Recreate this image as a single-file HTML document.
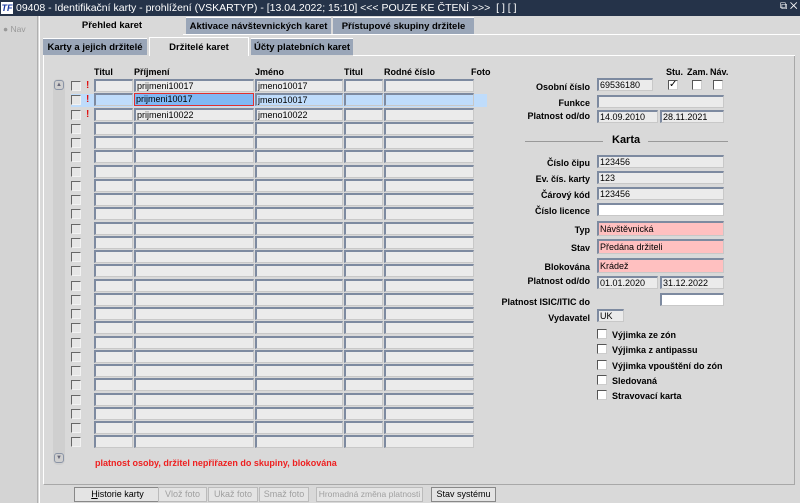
<!DOCTYPE html><html><head><meta charset="utf-8"><style>
*{margin:0;padding:0;box-sizing:border-box;white-space:nowrap}
html,body{width:800px;height:503px;overflow:hidden}
body{background:#d9d9d9;font-family:"Liberation Sans",sans-serif;font-size:9px;color:#000;position:relative}
.a{position:absolute}
.f{position:absolute;height:13px;background:#ebebeb;border:1px solid #c8c8c8;border-top:2px solid #7d8aa0;border-left:2px solid #7d8aa0;padding-left:1px;font-size:9px;line-height:10px;overflow:hidden}
.l{position:absolute;font-weight:bold;text-align:right;width:200px;font-size:9px}
.cb{position:absolute;width:10px;height:10px;background:#fff;border:1px solid #555;border-right-color:#ccc;border-bottom-color:#ccc}
.gc{position:absolute;width:10px;height:10px;border:1px solid #666;border-right-color:#f2f2f2;border-bottom-color:#f2f2f2;background:#e6e6e6}
.tab{position:absolute;font-weight:bold;text-align:center;font-size:9.5px}
.btn{position:absolute;top:487px;height:15px;border:1px solid #888;background:#e4e4e4;text-align:center;font-size:9px;line-height:13px;overflow:hidden}
.dis{color:#a0a0a0;border-color:#bbb}
</style></head><body>
<div class="a" style="left:0;top:0;width:800px;height:16px;background:#253349;color:#fff;font-size:10.5px;line-height:16px;padding-left:16px">09408 - Identifikační karty - prohlížení (VSKARTYP) - [13.04.2022; 15:10] &lt;&lt;&lt; POUZE KE ČTENÍ &gt;&gt;&gt;&nbsp; [ ] [ ]</div>
<div class="a" style="left:1px;top:2px;width:12px;height:12px;background:#fff;color:#1a3aa0;font-weight:bold;font-style:italic;font-size:9px;line-height:12px;text-align:center">TF</div>
<div class="a" style="left:780px;top:1px;color:#fff;font-size:10px">⧉ ✕</div>
<div class="a" style="left:0;top:16px;width:38px;height:487px;background:#d4d4d4;border-right:1px solid #b0b0b0"></div>
<div class="a" style="left:3px;top:24px;color:#999;font-size:8.5px">● Nav</div>
<div class="a" style="left:39px;top:16px;width:761px;height:487px;background:#d9d9d9;border-left:1px solid #fff"></div>
<div class="tab" style="left:41px;top:17px;width:142px;height:17px;line-height:17px;background:#d9d9d9">Přehled karet</div>
<div class="tab" style="left:186px;top:17px;width:145px;height:17px;line-height:17px;background:#9aa6b8;border-top:1px solid #fff">Aktivace návštevnických karet</div>
<div class="tab" style="left:333px;top:17px;width:141px;height:17px;line-height:17px;background:#9aa6b8;border-top:1px solid #fff">Přístupové skupiny držitele</div>
<div class="a" style="left:183px;top:34px;width:617px;height:1px;background:#fff"></div>
<div class="tab" style="left:43px;top:38px;width:104px;height:17px;line-height:17px;background:#9aa6b8;border-top:1px solid #fff">Karty a jejich držitelé</div>
<div class="tab" style="left:149px;top:37px;width:100px;height:19px;line-height:19px;background:#d9d9d9;border:1px solid #fff;border-bottom:none">Držitelé karet</div>
<div class="tab" style="left:251px;top:38px;width:102px;height:17px;line-height:17px;background:#9aa6b8;border-top:1px solid #fff">Účty platebních karet</div>
<div class="a" style="left:43px;top:55px;width:752px;height:430px;border:1px solid #fff;border-right-color:#a8a8a8;border-bottom-color:#a8a8a8;border-top:none"></div>
<div class="a" style="left:353px;top:55px;width:442px;height:1px;background:#fff"></div>
<div class="a" style="left:94px;top:67px;font-weight:bold">Titul</div>
<div class="a" style="left:134px;top:67px;font-weight:bold">Příjmení</div>
<div class="a" style="left:255px;top:67px;font-weight:bold">Jméno</div>
<div class="a" style="left:344px;top:67px;font-weight:bold">Titul</div>
<div class="a" style="left:384px;top:67px;font-weight:bold">Rodné číslo</div>
<div class="a" style="left:471px;top:67px;font-weight:bold">Foto</div>
<div class="a" style="left:53px;top:79px;width:12px;height:386px;background:#cfcfcf;border-radius:5px"></div>
<div class="a" style="left:54px;top:80px;width:10px;height:10px;border:1px solid #8a94a6;border-radius:3px;font-size:6px;text-align:center;line-height:8px;color:#667">▲</div>
<div class="a" style="left:54px;top:453px;width:10px;height:10px;border:1px solid #8a94a6;border-radius:3px;font-size:6px;text-align:center;line-height:8px;color:#667">▼</div>
<div class="a" style="left:71px;top:94px;width:416px;height:13px;background:#bfdcfb"></div>
<div id="g"></div>
<script>
var h='',names=[['prijmeni10017','jmeno10017'],['prijmeni10017','jmeno10017'],['prijmeni10022','jmeno10022']];
for(var i=0;i<26;i++){var y=79+i*14.25;
h+='<div class="gc" style="left:71px;top:'+(y+2)+'px"></div>';
if(i<3)h+='<div class="a" style="left:86px;top:'+(y+1)+'px;color:#e01010;font-weight:bold;font-size:10px">!</div>';
var n=names[i]||['',''],sel=i==1;
h+='<div class="f" style="left:94px;top:'+y+'px;width:39px;'+(sel?'background:#bfdcfb':'')+'"></div>';
h+='<div class="f" style="left:134px;top:'+y+'px;width:120px;'+(sel?'background:#7fb8f4;border:1px solid #e03030':'')+'">'+n[0]+'</div>';
h+='<div class="f" style="left:255px;top:'+y+'px;width:88px;'+(sel?'background:#bfdcfb':'')+'">'+n[1]+'</div>';
h+='<div class="f" style="left:344px;top:'+y+'px;width:39px;'+(sel?'background:#bfdcfb':'')+'"></div>';
h+='<div class="f" style="left:384px;top:'+y+'px;width:90px;'+(sel?'background:#bfdcfb':'')+'"></div>';}
document.getElementById('g').innerHTML=h;
</script>
<div class="a" style="left:95px;top:458px;color:#ee2020;font-weight:bold;font-size:9px">platnost osoby, držitel nepřiřazen do skupiny, blokována</div>
<div class="a" style="left:666px;top:67px;font-weight:bold">Stu.</div>
<div class="a" style="left:687px;top:67px;font-weight:bold">Zam.</div>
<div class="a" style="left:710px;top:67px;font-weight:bold">Náv.</div>
<div class="cb" style="left:668px;top:80px;font-size:10px;line-height:8px;text-align:center">✓</div>
<div class="cb" style="left:692px;top:80px"></div>
<div class="cb" style="left:713px;top:80px"></div>
<div class="l" style="left:390px;top:82px">Osobní číslo</div><div class="f" style="left:597px;top:78px;width:56px">69536180</div>
<div class="l" style="left:390px;top:98px">Funkce</div><div class="f" style="left:597px;top:95px;width:127px"></div>
<div class="l" style="left:390px;top:111px">Platnost od/do</div><div class="f" style="left:597px;top:110px;width:61px">14.09.2010</div><div class="f" style="left:660px;top:110px;width:64px">28.11.2021</div>
<div class="a" style="left:525px;top:141px;width:78px;height:1px;background:#999"></div>
<div class="a" style="left:648px;top:141px;width:80px;height:1px;background:#999"></div>
<div class="a" style="left:612px;top:134px;font-weight:bold;font-size:11px">Karta</div>
<div class="l" style="left:390px;top:158px">Číslo čipu</div><div class="f" style="left:597px;top:155px;width:127px">123456</div>
<div class="l" style="left:390px;top:174px">Ev. čís. karty</div><div class="f" style="left:597px;top:171px;width:127px">123</div>
<div class="l" style="left:390px;top:190px">Čárový kód</div><div class="f" style="left:597px;top:187px;width:127px">123456</div>
<div class="l" style="left:390px;top:206px">Číslo licence</div><div class="f" style="left:597px;top:203px;width:127px;background:#fff"></div>
<div class="l" style="left:390px;top:225px">Typ</div><div class="f" style="left:597px;top:221px;width:127px;height:15px;background:#ffc0c0;line-height:12px">Návštěvnická</div>
<div class="l" style="left:390px;top:243px">Stav</div><div class="f" style="left:597px;top:239px;width:127px;height:15px;background:#ffc0c0;line-height:12px">Předána držiteli</div>
<div class="l" style="left:390px;top:262px">Blokována</div><div class="f" style="left:597px;top:258px;width:127px;height:15px;background:#ffc0c0;line-height:12px">Krádež</div>
<div class="l" style="left:390px;top:276px">Platnost od/do</div><div class="f" style="left:597px;top:276px;width:61px">01.01.2020</div><div class="f" style="left:660px;top:276px;width:64px">31.12.2022</div>
<div class="l" style="left:390px;top:297px">Platnost ISIC/ITIC do</div><div class="f" style="left:660px;top:293px;width:64px;background:#fff"></div>
<div class="l" style="left:390px;top:313px">Vydavatel</div><div class="f" style="left:597px;top:309px;width:27px">UK</div>
<div class="cb" style="left:597px;top:329px"></div><div class="a" style="left:612px;top:330px;font-weight:bold">Výjimka ze zón</div>
<div class="cb" style="left:597px;top:344px"></div><div class="a" style="left:612px;top:345px;font-weight:bold">Výjimka z antipassu</div>
<div class="cb" style="left:597px;top:360px"></div><div class="a" style="left:612px;top:361px;font-weight:bold">Výjimka vpouštění do zón</div>
<div class="cb" style="left:597px;top:375px"></div><div class="a" style="left:612px;top:376px;font-weight:bold">Sledovaná</div>
<div class="cb" style="left:597px;top:390px"></div><div class="a" style="left:612px;top:391px;font-weight:bold">Stravovací karta</div>
<div class="btn" style="left:74px;width:87px"><u>H</u>istorie karty</div>
<div class="btn dis" style="left:158px;width:49px">Vlož foto</div>
<div class="btn dis" style="left:208px;width:50px">Ukaž foto</div>
<div class="btn dis" style="left:259px;width:50px">Smaž foto</div>
<div class="btn dis" style="left:316px;width:107px;font-size:8.5px">Hromadná změna platnosti</div>
<div class="btn" style="left:431px;width:65px">Stav systému</div>
</body></html>
